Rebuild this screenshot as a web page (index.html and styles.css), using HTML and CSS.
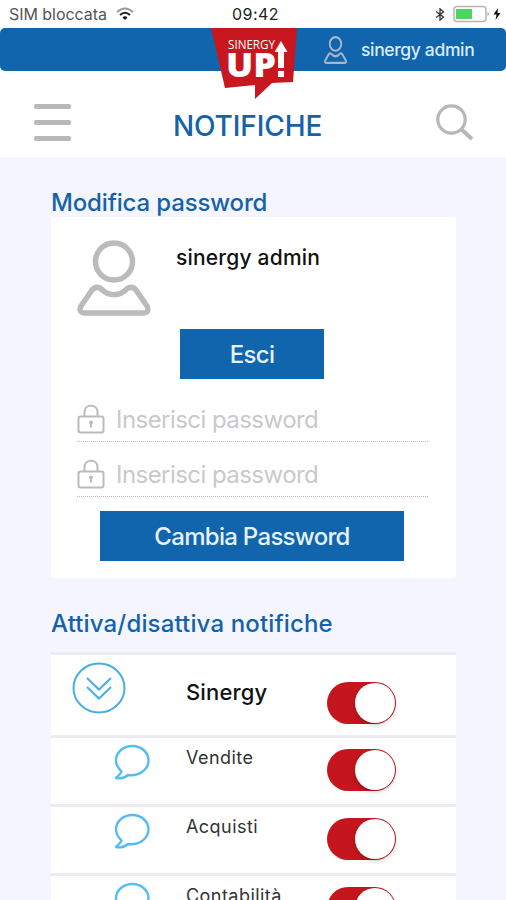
FILE: index.html
```html
<!DOCTYPE html>
<html lang="it">
<head>
<meta charset="utf-8">
<title>Notifiche</title>
<link rel="stylesheet" href="styles.css">
</head>
<body>
<svg width="0" height="0" class="defs">
  <symbol id="user" viewBox="0 0 74 76"><g fill="none" stroke="currentColor" stroke-linejoin="round"><circle cx="37" cy="21.500" r="18.500"/><path d="M4 66L15 50Q18 46 23 48C32 57 42 57 51 48Q56 46 59 50L70 66Q73 73 66 73H8Q1 73 4 66Z"/></g></symbol>
  <symbol id="lock" viewBox="0 0 28 30"><g fill="none" stroke="currentColor" stroke-width="2"><rect x="1.500" y="12.500" width="25" height="16" rx="2"/><path d="M7.500 12V8C7.500-.5 20.500-.5 20.500 8V12"/></g><circle cx="14" cy="18.500" r="2" fill="currentColor"/><path d="M14 18V23.500" stroke="currentColor" stroke-width="2"/></symbol>
  <symbol id="bubble" viewBox="0 0 36 36"><path d="M18.500 2C9 2 2 8.500 2 16.500C2 20.500 4 24 7.500 27.500Q6.500 30 2 34Q9 35.500 14 31C25 32.500 34.500 25.500 34.500 16.500C34.500 8.500 27.500 2 18.500 2Z" fill="none" stroke="currentColor" stroke-width="2.400" stroke-linejoin="round"/></symbol>
</svg>
<div class="status">
  <span class="carrier">SIM bloccata</span>
  <svg class="wifi" width="18" height="14" viewBox="0 0 18 14" fill="none"><path d="M1 5Q9-2 17 5" stroke="#999" stroke-width="2"/><path d="M4 8Q9 3.500 14 8" stroke="#222" stroke-width="2"/><path d="M6.500 10.500Q9 8 11.500 10.500L9 13Z" fill="#111"/></svg>
  <span class="clock">09:42</span>
  <svg class="bluetooth" width="12" height="13" viewBox="0 0 12 15" fill="none" stroke="#333" stroke-width="1.500"><path d="M1.500 4L10 10.500L6 14V1L10 4.500L1.500 11"/></svg>
  <svg class="battery" width="49" height="18" viewBox="0 0 49 18"><rect x="1" y="1.500" width="32" height="15" rx="3" fill="#fff" stroke="#b5b5b5" stroke-width="1.500"/><rect x="3" y="4" width="16" height="10" fill="#4cd75f"/><path d="M34.500 7Q37.500 9 34.500 11Z" fill="#aaa"/><path d="M45 3L40.500 9.500H43.500L42.500 15L47.500 8H44.500Z" fill="#111"/></svg>
</div>
<div class="topbar">
  <svg class="logo" width="88" height="73" viewBox="0 0 88 73"><path d="M0 0H86L82 54L61 55L44 71V57L14 60Z" fill="#c91720"/><text x="17" y="21" textLength="47" lengthAdjust="spacingAndGlyphs" class="logo-small">SINERGY</text><text x="15" y="48.500" textLength="50" lengthAdjust="spacingAndGlyphs" class="logo-big">UP</text><path d="M70 13L76.500 24H73V40H67V24H63.500ZM67 43H73V49H67Z" fill="#fff"/></svg>
  <svg class="user-small" viewBox="0 0 74 76" preserveAspectRatio="none"><use href="#user" width="74" height="76"/></svg>
  <span class="account">sinergy admin</span>
</div>
<header class="header">
  <div class="menu"><i></i><i></i><i></i></div>
  <h1>NOTIFICHE</h1>
  <svg class="search" width="38" height="38" viewBox="0 0 38 38" fill="none" stroke="#b7b7b7"><circle cx="15.500" cy="15.500" r="13.700" stroke-width="3.200"/><path d="M25 25L36 35" stroke-width="4"/></svg>
</header>
<main>
  <h2 class="title-password">Modifica password</h2>
  <section class="card">
    <div class="profile">
      <svg class="user-big"><use href="#user"/></svg>
      <div class="name">sinergy admin</div>
    </div>
    <button class="btn logout"><span>Esci</span></button>
    <div class="field"><svg class="lock"><use href="#lock"/></svg><span>Inserisci password</span></div>
    <div class="field second"><svg class="lock"><use href="#lock"/></svg><span>Inserisci password</span></div>
    <button class="btn change"><span>Cambia Password</span></button>
  </section>
  <h2 class="title-notify">Attiva/disattiva notifiche</h2>
  <section class="list">
    <div class="row group">
      <svg class="expand" width="54" height="52" viewBox="0 0 54 52" fill="none" stroke="#48afe5" stroke-width="2"><ellipse cx="27" cy="26" rx="25.500" ry="24.500"/><path d="M15 16L27 27.500L39 16M15 25L27 36.500L39 25"/></svg>
      <span class="label">Sinergy</span><span class="toggle"></span>
    </div>
    <div class="row"><svg class="bubble"><use href="#bubble"/></svg><span class="label">Vendite</span><span class="toggle"></span></div>
    <div class="row"><svg class="bubble"><use href="#bubble"/></svg><span class="label">Acquisti</span><span class="toggle"></span></div>
    <div class="row"><svg class="bubble"><use href="#bubble"/></svg><span class="label">Contabilità</span><span class="toggle"></span></div>
  </section>
</main>
</body>
</html>
```
FILE: styles.css
```css
* { box-sizing: border-box; }
body { margin: 0; width: 506px; height: 900px; overflow: hidden; background: #fff; font-family: Inter, "Liberation Sans", sans-serif; color: #111; display: flex; flex-direction: column; }
h1, h2 { margin: 0; font-weight: 500; color: #1462a8; }
svg { display: block; flex: none; }
span, h1, h2, .name { white-space: nowrap; }
.defs { position: absolute; }
.status { height: 28px; flex: none; display: flex; align-items: center; padding-left: 9px; font-size: 16px; }
.carrier { width: 107px; color: #555; letter-spacing: -0.05px; }
.clock { margin-left: 98px; width: 48px; color: #222; letter-spacing: 0.45px; }
.bluetooth { margin-left: 154px; }
.battery { margin-left: 7px; }
.topbar { position: relative; height: 43px; flex: none; background: #1065ad; border-radius: 5px; display: flex; align-items: center; padding-left: 324px; color: #dcebfb; }
.logo { position: absolute; left: 211px; top: 0; z-index: 1; }
.logo-small { font: 500 12px "Open Sans", sans-serif; fill: #fff; }
.logo-big { font: 800 33.500px "Open Sans", sans-serif; fill: #fff; }
.user-small { width: 23px; height: 28px; color: #a9b6c8; stroke-width: 6px; }
.account { margin-left: 14px; font-size: 17.500px; font-weight: 500; letter-spacing: -0.35px; }
.header { height: 86px; flex: none; display: flex; align-items: flex-start; padding: 33px 0 0 34px; }
.menu { width: 37px; display: flex; flex-direction: column; gap: 11px; }
.menu i { height: 5px; border-radius: 2px; background: #b9b9b9; }
h1 { margin: 6px 0 0 102px; width: 150px; font-size: 28px; line-height: 32px; letter-spacing: -0.1px; }
.search { margin-left: 113px; }
main { flex: 1; min-height: 0; overflow: hidden; background: #f4f5ff; padding: 31px 50px 0 51px; }
h2 { font-size: 24px; line-height: 30px; letter-spacing: -0.15px; }
.card { height: 361px; margin-top: -1px; background: #fff; border-radius: 3px; padding: 23px 28px 0 26px; }
.profile { height: 89px; display: flex; }
.user-big { width: 74px; height: 76px; color: #bbb; stroke-width: 5.500px; }
.name { margin: 4px 0 0 25px; font-size: 21px; line-height: 28px; font-weight: 500; letter-spacing: 0.2px; }
.btn { display: flex; align-items: center; justify-content: center; border: 0; padding: 0; height: 50px; background: #1065ad; color: #e6f2ff; font: 500 24px Inter, sans-serif; letter-spacing: -0.7px; }
.logout { width: 144px; margin-left: 103px; }
.change { width: 304px; margin: 14px 0 0 23px; }
.field { height: 43px; margin-top: 20px; border-bottom: 1px dotted #bbb; display: flex; align-items: center; color: #c9c9cc; font-size: 24px; letter-spacing: -0.55px; padding-bottom: 2px; }
.field.second { margin-top: 12px; }
.lock { width: 28px; height: 30px; color: #bbb; }
.field span { margin-left: 11px; }
.title-notify { margin-top: 31px; letter-spacing: 0.15px; }
.list { margin-top: 13px; background: #fff; }
.row { height: 69px; border-top: 3px solid #ebecef; display: flex; align-items: flex-start; padding-left: 63px; }
.row.group { height: 83px; padding-left: 21px; }
.expand { margin-top: 7px; }
.bubble { margin-top: 6px; width: 36px; height: 36px; color: #55bdf2; }
.label { width: 142px; margin: 8px 0 0 36px; font-size: 18px; line-height: 24px; letter-spacing: 0.45px; color: #333; }
.group .label { margin: 22px 0 0 60px; width: 141px; font-size: 22px; line-height: 30px; font-weight: 500; letter-spacing: 0.15px; color: #111; }
.toggle { width: 69px; height: 42px; margin-top: 11px; margin-left: -1px; border-radius: 21px; background: #c5161d; padding: 1px; display: flex; justify-content: flex-end; }
.group .toggle { margin-top: 27px; margin-left: 0; }
.toggle::after { content: ""; width: 40px; height: 40px; border-radius: 50%; background: #fff; box-shadow: 0 2px 4px rgba(0,0,0,.22); }
```
